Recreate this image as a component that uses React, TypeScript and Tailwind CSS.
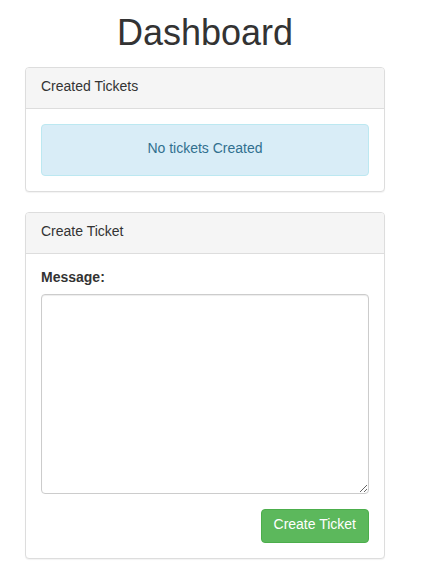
import React from "react";

export default function App() {
  return (
    <div className="min-h-[575px] bg-white text-[14px] leading-[20px] text-[#333]" style={{ fontFamily: '"Liberation Sans", Arial, sans-serif' }}>
      <div className="ml-[25px] w-[360px]">
        <h1 className="pt-[13px] mb-[14px] text-center text-[36px] leading-[39.6px] font-normal">Dashboard</h1>
        <div className="mb-[20px] rounded-[4px] border border-[#ddd] bg-white shadow-[0_1px_1px_rgba(0,0,0,0.05)]">
          <div className="rounded-t-[3px] border-b border-[#ddd] bg-[#f5f5f5] px-[15px] pt-[8px] pb-[12px]">Created Tickets</div>
          <div className="p-[15px]">
            <div className="rounded-[4px] border border-[#bce8f1] bg-[#d9edf7] px-[15px] pt-[13px] pb-[17px] text-center text-[#31708f]">No tickets Created</div>
          </div>
        </div>
        <div className="rounded-[4px] border border-[#ddd] bg-white shadow-[0_1px_1px_rgba(0,0,0,0.05)]">
          <div className="rounded-t-[3px] border-b border-[#ddd] bg-[#f5f5f5] px-[15px] pt-[8px] pb-[12px]">Create Ticket</div>
          <div className="px-[15px] pt-[13px] pb-[15px]">
            <label className="mb-[7px] inline-block font-bold">Message:</label>
            <textarea className="block h-[200px] w-full rounded-[4px] border border-[#ccc] bg-white px-[12px] py-[6px] shadow-[inset_0_1px_1px_rgba(0,0,0,0.075)] outline-none" />
            <div className="mt-[15px] flex justify-end">
              <button className="h-[34px] rounded-[4px] border border-[#4cae4c] bg-[#5cb85c] px-[12px] pb-[4px] text-[14px] text-white">Create Ticket</button>
            </div>
          </div>
        </div>
      </div>
    </div>
  );
}
